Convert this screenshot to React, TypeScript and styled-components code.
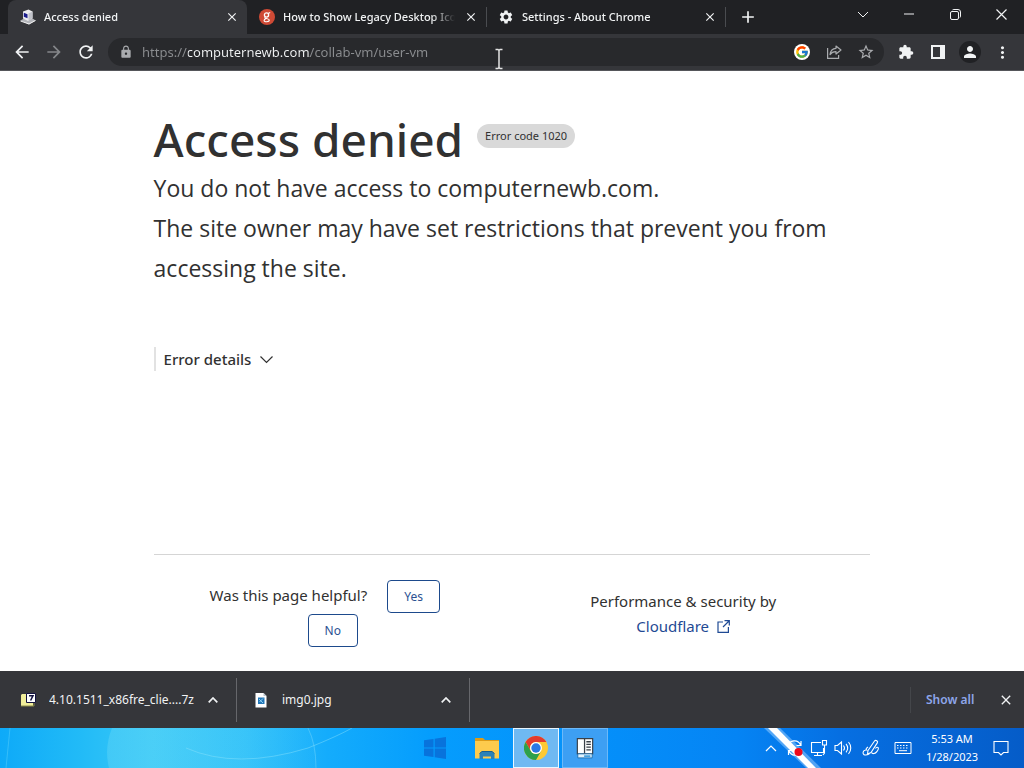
import React from "react";
import styled, { createGlobalStyle } from "styled-components";
import {
  MdAdd,
  MdArrowBack,
  MdArrowForward,
  MdClose,
  MdExtension,
  MdLock,
  MdMoreVert,
  MdPerson,
  MdRefresh,
  MdSettings,
  MdStarBorder,
} from "react-icons/md";
import { FcGoogle } from "react-icons/fc";

const GlobalStyle = createGlobalStyle`
  *, *::before, *::after { box-sizing: border-box; }
  body {
    margin: 0;
    background: #fff;
    font-family: "Noto Sans", "Open Sans", sans-serif;
    color: #313131;
  }
  h1, p { margin: 0; }
  button { border: 0; padding: 0; background: none; color: inherit; font: inherit; }
  svg { display: block; flex: none; }
`;

const Screen = styled.div`
  display: flex;
  flex-direction: column;
  min-height: 100vh;
`;

/* ---------- tab strip ---------- */

const TabStrip = styled.header`
  display: flex;
  height: 34px;
  padding-left: 8px;
  background: #202124;
  color: #f1f3f4;
`;

const Tab = styled.div<{ $active?: boolean; $divided?: boolean }>`
  display: flex;
  align-items: center;
  gap: 8px;
  flex: 0 1 239px;
  min-width: 0;
  padding: 0 7px 0 12px;
  font-size: 11px;
  font-weight: 500;
  border-radius: ${(p) => (p.$active ? "8px 8px 0 0" : "0")};
  background: ${(p) => (p.$active ? "#35363a" : "transparent")};
  background-image: ${(p) => (p.$divided ? "linear-gradient(#4a4c50, #4a4c50)" : "none")};
  background-size: 1px 20px;
  background-position: left center;
  background-repeat: no-repeat;
`;

const TabTitle = styled.span`
  flex: 1;
  min-width: 0;
  overflow: hidden;
  white-space: nowrap;
  line-height: 20px;
  mask-image: linear-gradient(to left, transparent, #000 24px);
`;

const TabClose = styled.button`
  display: grid;
  place-items: center;
  width: 16px;
  height: 16px;
`;

const NewTab = styled.button`
  display: grid;
  place-items: center;
  width: 46px;
  background: linear-gradient(#4a4c50, #4a4c50) left center / 1px 20px no-repeat;
`;

const WindowControls = styled.div`
  display: flex;
  margin-left: auto;
  height: 28px;
`;

const WindowButton = styled.button`
  display: grid;
  place-items: center;
  width: 46px;
`;

/* ---------- toolbar ---------- */

const Toolbar = styled.div`
  position: relative;
  display: flex;
  align-items: center;
  gap: 4px;
  height: 37px;
  padding: 0 8px;
  background: #35363a;
  border-bottom: 1px solid #55565a;
  color: #f1f3f4;
`;

const ToolButton = styled.button<{ $muted?: boolean }>`
  display: grid;
  place-items: center;
  width: 28px;
  height: 28px;
  border-radius: 50%;
  color: ${(p) => (p.$muted ? "#85878a" : "inherit")};
`;

const Avatar = styled.span`
  display: grid;
  place-items: center;
  width: 22px;
  height: 22px;
  border-radius: 50%;
  background: #202124;
`;

const SearchBrand = styled.span`
  display: grid;
  place-items: center;
  width: 16px;
  height: 16px;
  border-radius: 50%;
  background: #fff;
`;

const Omnibox = styled.div`
  display: flex;
  align-items: center;
  gap: 4px;
  flex: 1;
  min-width: 0;
  height: 28px;
  margin: 0 4px;
  padding: 0 4px 0 11px;
  border-radius: 14px;
  background: #28292c;
  color: #a9abae;
`;

/* The host part of the address is lit, scheme and path are dimmed. */
const Address = styled.input`
  flex: 1;
  min-width: 0;
  height: 24px;
  margin-left: 5px;
  padding: 0;
  border: 0;
  outline: 0;
  font: 13px "Noto Sans", "Open Sans", sans-serif;
  color: #f1f3f4;
  background: linear-gradient(to right, #8b8d90 46px, #f1f3f4 46px 168px, #8b8d90 168px);
  -webkit-background-clip: text;
  background-clip: text;
  -webkit-text-fill-color: transparent;
`;

const Pointer = styled.svg`
  position: absolute;
  left: 494px;
  top: 14px;
`;

/* ---------- error page ---------- */

const Page = styled.main`
  flex: 1;
  display: flex;
  flex-direction: column;
  width: 70%;
  margin: 0 auto;
  padding: 39px 0 24px;
`;

const TitleRow = styled.div`
  display: flex;
  align-items: center;
  gap: 14px;
`;

const Title = styled.h1`
  font-size: 46px;
  line-height: 58px;
  font-weight: 500;
`;

const CodeBadge = styled.span`
  margin-bottom: 6px;
  padding: 0 8px;
  border-radius: 12px;
  background: #d9d9d9;
  font-size: 11px;
  line-height: 24px;
`;

const Lead = styled.p`
  font-family: "Open Sans", "Noto Sans", sans-serif;
  font-size: 23px;
  line-height: 40px;
  font-weight: 400;
`;

const DetailsToggle = styled.button`
  display: flex;
  align-items: center;
  align-self: flex-start;
  gap: 8px;
  height: 24px;
  margin-top: 59px;
  padding-left: 8px;
  border-left: 2px solid #e2e2e2;
  font-size: 15px;
  font-weight: 500;
`;

const PageFooter = styled.footer`
  display: grid;
  grid-template-columns: 1fr 1fr;
  align-items: center;
  margin-top: auto;
  padding-top: 25px;
  border-top: 1px solid #d5d5d5;
  font-size: 15px;
  line-height: 24px;
`;

const FooterCell = styled.div`
  display: flex;
  flex-direction: column;
  align-items: center;
  gap: 1px;
  padding-right: 16px;
`;

const FeedbackRow = styled.div`
  display: flex;
  align-items: baseline;
  gap: 4px;
`;

const FeedbackButton = styled.button`
  height: 33px;
  margin-left: 16px;
  padding: 0 16px;
  border: 1px solid #1d4a8c;
  border-radius: 4px;
  color: #2c5192;
  font-size: 12px;
`;

const BrandLink = styled.a`
  display: flex;
  align-items: center;
  gap: 8px;
  color: #1f4a94;
  text-decoration: none;
`;

/* ---------- download shelf ---------- */

const Shelf = styled.section`
  display: flex;
  align-items: center;
  height: 57px;
  padding-left: 4px;
  background: #35363a;
  color: #f1f3f4;
  font-size: 12px;
`;

const Download = styled.div`
  display: flex;
  align-items: center;
  flex: 0 1 233px;
  min-width: 0;
  height: 44px;
  padding: 0 15px 0 16px;
  border-right: 1px solid #66676b;
`;

const FileName = styled.span`
  flex: 1;
  min-width: 0;
  margin-left: 13px;
  overflow: hidden;
  white-space: nowrap;
`;

const ShelfActions = styled.div`
  display: flex;
  align-items: center;
  justify-content: space-between;
  width: 114px;
  height: 26px;
  margin-left: auto;
  padding: 0 10px 0 15px;
  border-left: 1px solid #44464a;
`;

const ShowAll = styled.button`
  color: #8ea6ea;
  font-size: 12px;
  font-weight: 600;
`;

/* ---------- taskbar ---------- */

const Taskbar = styled.footer`
  position: relative;
  display: grid;
  grid-template-columns: 1fr auto 1fr;
  height: 40px;
  padding-right: 7px;
  color: #fff;
  background: linear-gradient(
    to right,
    #0eaaf8 0%,
    #22bbf7 8%,
    #3bc9f7 15%,
    #2fc0f9 24%,
    #14acfc 32%,
    #059dfd 42%,
    #0490fa 58%,
    #0584f4 72%,
    #066fe2 82%,
    #055cc8 100%
  );
`;

const Wallpaper = styled.svg`
  position: absolute;
  inset: 0;
  width: 100%;
  height: 100%;
`;

const Apps = styled.nav`
  position: relative;
  grid-column: 2;
  display: flex;
  gap: 3px;
`;

const AppButton = styled.button<{ $state?: "open" | "active"; $wide?: boolean }>`
  display: grid;
  place-items: center;
  width: ${(p) => (p.$wide ? "52px" : "46px")};
  border: ${(p) =>
    p.$state === "active" ? "1px solid #e8f6ff" : p.$state === "open" ? "1px solid #6cb9f8" : "0"};
  background: ${(p) =>
    p.$state === "active" ? "#6fb9f2" : p.$state === "open" ? "#3d9ff3" : "none"};
`;

const Tray = styled.div`
  position: relative;
  display: flex;
  align-items: center;
  justify-content: flex-end;
`;

const TrayButton = styled.button<{ $width: number }>`
  display: grid;
  place-items: center;
  width: ${(p) => p.$width}px;
  height: 40px;
`;

const Clock = styled.time`
  width: 66px;
  font-size: 11px;
  line-height: 18px;
  text-align: center;
`;

/* ---------- drawings ---------- */

const ComputerIcon = () => (
  <svg width="16" height="16" viewBox="0 0 16 16">
    <path d="M.5 11.500L4 9.500l8-.5 3.500 2.500-6.500 4z" fill="#b3b5ba" />
    <path d="M.5 12l8.500 3 6.500-3.500" fill="none" stroke="#f3f3f3" />
    <path d="M3 2.500L8.500 .5 12.500 2.500v6.500L8 12 3 9.500z" fill="#ececef" />
    <path d="M8.500 4.500l4-2v6.500L8.500 11.500z" fill="#c0c2c9" />
    <path d="M3.800 3.800l3.700 1.400v4L3.800 7.800z" fill="#1b1c8c" />
  </svg>
);

const GrooveIcon = () => (
  <svg width="16" height="16" viewBox="0 0 16 16">
    <circle cx="8" cy="8" r="8" fill="#cf4a35" />
    <circle cx="7.500" cy="6" r="2.100" fill="none" stroke="#fff" strokeWidth="1.300" />
    <path d="M9 4.600l2.200-1M6.300 8.200c-2 1.400 4 .9 4 2.900 0 2.200-5.200 2.200-5.200.3 0-1 1-1.400 1.800-1.600" fill="none" stroke="#fff" strokeWidth="1.100" />
  </svg>
);

const ShareIcon = () => (
  <svg width="16" height="16" viewBox="0 0 16 16" fill="none" stroke="currentColor" strokeWidth="1.200">
    <path d="M1.600 4v10.400h11V11" />
    <path d="M10 2l5 4-5 4V7.700C7 7.600 5.500 8.500 4 10.600 4.500 7 6.500 4.500 10 4.300z" strokeLinejoin="round" />
  </svg>
);

const SidePanelIcon = () => (
  <svg width="14" height="14" viewBox="0 0 14 14">
    <path d="M0 0h14v14H0zM2 2v10h7V2z" fill="currentColor" fillRule="evenodd" />
  </svg>
);

const CaretUp = () => (
  <svg width="10" height="6" viewBox="0 0 10 6" fill="none" stroke="currentColor" strokeWidth="1.700">
    <path d="M.7 5.300L5 1l4.300 4.300" />
  </svg>
);

const ArchiveIcon = () => (
  <svg width="16" height="16" viewBox="0 0 16 16">
    <path d="M1 3l1-1h4v2h7v10H1z" fill="#f1ee9a" />
    <path d="M1 14h13V8" fill="none" stroke="#8b8a4a" />
    <path d="M6.500 1.500h9v9h-9z" fill="#fff" stroke="#12123f" />
    <path d="M9 3.700h4L10.600 8.500" fill="none" stroke="#12123f" strokeWidth="1.500" />
  </svg>
);

const ImageFileIcon = () => (
  <svg width="16" height="16" viewBox="0 0 16 16">
    <path d="M2.500 1h8l3 3v11.500h-11z" fill="#fff" />
    <path d="M10.500 1v3h3z" fill="#b9c3cc" />
    <path d="M5 5.500h6.500V12H5z" fill="#2277b8" />
    <path d="M6 7l4 4M10 6.500L6.500 10" stroke="#8cd0f2" />
  </svg>
);

const WindowsIcon = () => (
  <svg width="22" height="22" viewBox="0 0 22 22" fill="#0873dc">
    <path d="M0 3.200L9.500 2v8.500H0zM10.700 1.800L22 0v10.500H10.700zM0 11.600h9.500V20L0 18.700zM10.700 11.600H22V22l-11.300-1.700z" />
  </svg>
);

const FolderIcon = () => (
  <svg width="26" height="24" viewBox="0 0 26 24">
    <path d="M1 2h8l2 2h14v8H1z" fill="#dd9b17" />
    <path d="M1 5h24v17.500H1z" fill="#fdcb4d" />
    <path d="M5.500 23v-5.500l2.500-2h10l2.500 2V23h-3.500v-2.500H9V23z" fill="#2c82b8" />
    <path d="M5.500 17.500l2.500-2h10l2.500 2" fill="none" stroke="#175f93" />
  </svg>
);

const ChromeIcon = () => (
  <svg width="24" height="24" viewBox="0 0 24 24">
    <circle cx="12" cy="12" r="12" fill="#fcc934" />
    <path d="M1.600 6A12 12 0 0 1 22.400 6H12a6 6 0 0 0-5.200 9z" fill="#e33b2e" />
    <path d="M1.600 6A12 12 0 0 0 12 24l5.200-9A6 6 0 0 1 6.800 15z" fill="#2da04c" />
    <circle cx="12" cy="12" r="6" fill="#fff" />
    <circle cx="12" cy="12" r="4.700" fill="#2a78e4" />
  </svg>
);

const ServerAppIcon = () => (
  <svg width="18" height="22" viewBox="0 0 20 24">
    <path d="M1.500 1.500h17v17h-17z" fill="#fff" stroke="#3a4048" strokeWidth="1.300" />
    <path d="M9.500 1.500v17" stroke="#3a4048" strokeWidth="1.400" />
    <path d="M11.500 5h5M11.500 8h5M11.500 11h5M11.500 14h5" stroke="#3a4048" strokeWidth="1.500" />
    <path d="M2 18.500h16V23H2z" fill="#e4f3fc" stroke="#1b6cae" />
    <path d="M9 21h7" stroke="#1b8ad6" strokeWidth="1.500" />
  </svg>
);

const SyncIcon = () => (
  <svg width="18" height="18" viewBox="0 0 18 18" fill="none" stroke="#fff" strokeWidth="1.200">
    <path d="M2 7.500A6.500 6.500 0 0 1 14.500 6M15 2v4.500h-4.500M15.500 10A6.500 6.500 0 0 1 3 12M2.500 16v-4.500H7" />
    <circle cx="12.500" cy="13" r="4" fill="#f0091c" stroke="none" />
  </svg>
);

const NetworkIcon = () => (
  <svg width="18" height="18" viewBox="0 0 18 18" fill="none" stroke="#fff" strokeWidth="1.100">
    <path d="M11 3.500H1.500v10h12V9M7.500 13.500v3M4 16.500h8" />
    <path d="M12.500 1.500h4v4.500h-4zM14.500 6v8l-1.500 2" />
  </svg>
);

const SpeakerIcon = () => (
  <svg width="18" height="16" viewBox="0 0 18 16" fill="none" stroke="#fff" strokeWidth="1.100">
    <path d="M1 5.500h2.500L7.500 2v12l-4-3.500H1zM9.500 5.500c1.200 1.500 1.200 3.500 0 5M12 3.800c2 2.500 2 6 0 8.500M14.500 2c3 3.500 3 8.500 0 12" />
  </svg>
);

const PenIcon = () => (
  <svg width="18" height="18" viewBox="0 0 18 18" fill="none" stroke="#fff" strokeWidth="1.100">
    <path d="M6 11.500L12.500 2c1.300-1.500 3.900.2 2.800 1.900L9 13.500 5.500 15z" />
    <path d="M6 8C4.500 9 3.500 10 4.500 11c-4-.5-4.500 4.500-1.500 5 2.500.3 3-.5 4.500-1.500M9.500 13.500c1 2 3.500 1 5-.5s2.500-4 1.500-4.500-2 0-2.500 1" />
  </svg>
);

const KeyboardIcon = () => (
  <svg width="18" height="12" viewBox="0 0 18 12" fill="none" stroke="#fff">
    <path d="M1 .5h16v11H1z" />
    <path d="M3 3.500h12M3 6h12" strokeDasharray="1.500 1.500" />
    <path d="M5 8.700h8" />
  </svg>
);

const NoticeIcon = () => (
  <svg width="16" height="16" viewBox="0 0 16 16" fill="none" stroke="#fff" strokeWidth="1.100">
    <path d="M1 1.500h14v11h-4.500L8 15l-2.500-2.500H1z" />
  </svg>
);

export default function App() {
  return (
    <>
      <GlobalStyle />
      <Screen>
        <TabStrip>
          <Tab $active>
            <ComputerIcon />
            <TabTitle>Access denied</TabTitle>
            <TabClose aria-label="Close tab"><MdClose size={14} /></TabClose>
          </Tab>
          <Tab>
            <GrooveIcon />
            <TabTitle>How to Show Legacy Desktop Icons</TabTitle>
            <TabClose aria-label="Close tab"><MdClose size={14} /></TabClose>
          </Tab>
          <Tab $divided>
            <MdSettings size={16} />
            <TabTitle>Settings - About Chrome</TabTitle>
            <TabClose aria-label="Close tab"><MdClose size={14} /></TabClose>
          </Tab>
          <NewTab aria-label="New tab"><MdAdd size={20} /></NewTab>
          <WindowControls>
            <WindowButton aria-label="Search tabs">
              <svg width="12" height="7" viewBox="0 0 12 7" fill="none" stroke="currentColor"><path d="M1 1l5 5 5-5" /></svg>
            </WindowButton>
            <WindowButton aria-label="Minimize">
              <svg width="10" height="2" viewBox="0 0 10 2"><path d="M0 .5h10v1H0z" fill="currentColor" /></svg>
            </WindowButton>
            <WindowButton aria-label="Restore">
              <svg width="11" height="11" viewBox="0 0 11 11" fill="none" stroke="currentColor">
                <rect x=".5" y="2.500" width="8" height="8" rx="1.500" />
                <path d="M2.500 .9Q3 .5 4 .5h4a2.500 2.500 0 0 1 2.500 2.500v4q0 1-.5 1.500" />
              </svg>
            </WindowButton>
            <WindowButton aria-label="Close">
              <svg width="11" height="11" viewBox="0 0 11 11" stroke="currentColor" strokeWidth="1.200"><path d="M.5 .5l10 10M10.500 .5l-10 10" /></svg>
            </WindowButton>
          </WindowControls>
        </TabStrip>

        <Toolbar>
          <ToolButton aria-label="Back"><MdArrowBack size={20} /></ToolButton>
          <ToolButton $muted aria-label="Forward"><MdArrowForward size={20} /></ToolButton>
          <ToolButton aria-label="Reload"><MdRefresh size={20} /></ToolButton>
          <Omnibox>
            <MdLock size={14} />
            <Address aria-label="Address" defaultValue="https://computernewb.com/collab-vm/user-vm" spellCheck={false} />
            <ToolButton aria-label="Search with Google"><SearchBrand><FcGoogle size={14} /></SearchBrand></ToolButton>
            <ToolButton aria-label="Share"><ShareIcon /></ToolButton>
            <ToolButton aria-label="Bookmark"><MdStarBorder size={18} /></ToolButton>
          </Omnibox>
          <ToolButton aria-label="Extensions"><MdExtension size={16} /></ToolButton>
          <ToolButton aria-label="Side panel"><SidePanelIcon /></ToolButton>
          <ToolButton aria-label="Profile"><Avatar><MdPerson size={18} /></Avatar></ToolButton>
          <ToolButton aria-label="Menu"><MdMoreVert size={19} /></ToolButton>
          <Pointer width="10" height="22" viewBox="0 0 10 22" fill="none" stroke="#e4e4e4" strokeWidth="1.500">
            <path d="M1.500 1.500H4L5 2.500 6 1.500h2.500M5 2.500v17M1.500 20.500H4l1-1 1 1h2.500" />
          </Pointer>
        </Toolbar>

        <Page>
          <TitleRow>
            <Title>Access denied</Title>
            <CodeBadge>Error code 1020</CodeBadge>
          </TitleRow>
          <Lead>You do not have access to computernewb.com.</Lead>
          <Lead>The site owner may have set restrictions that prevent you from accessing the site.</Lead>
          <DetailsToggle aria-expanded={false}>
            Error details
            <svg width="15" height="9" viewBox="0 0 15 9" fill="none" stroke="currentColor" strokeWidth="1.200"><path d="M1.500 1.500l6 6 6-6" /></svg>
          </DetailsToggle>
          <PageFooter>
            <FooterCell>
              <FeedbackRow>
                Was this page helpful?
                <FeedbackButton>Yes</FeedbackButton>
              </FeedbackRow>
              <FeedbackButton>No</FeedbackButton>
            </FooterCell>
            <FooterCell>
              <span>Performance &amp; security by</span>
              <BrandLink href="#cloudflare">
                Cloudflare
                <svg width="13" height="13" viewBox="0 0 13 13" fill="none" stroke="currentColor" strokeWidth="1.200">
                  <path d="M6 2H1v10.400h10.400V7M7.500 .700h4.800v4.800M12 1L6 7" />
                </svg>
              </BrandLink>
            </FooterCell>
          </PageFooter>
        </Page>

        <Shelf aria-label="Downloads">
          <Download>
            <ArchiveIcon />
            <FileName>4.10.1511_x86fre_clie....7z</FileName>
            <TabClose aria-label="File options"><CaretUp /></TabClose>
          </Download>
          <Download>
            <ImageFileIcon />
            <FileName>img0.jpg</FileName>
            <TabClose aria-label="File options"><CaretUp /></TabClose>
          </Download>
          <ShelfActions>
            <ShowAll>Show all</ShowAll>
            <TabClose aria-label="Close downloads"><MdClose size={16} /></TabClose>
          </ShelfActions>
        </Shelf>

        <Taskbar>
          <Wallpaper viewBox="0 0 1024 40" preserveAspectRatio="none" fill="none">
            <defs>
              <linearGradient id="glow" x1="0" x2="1" y1="0" y2="0">
                <stop offset="0" stopColor="#7be0f6" stopOpacity=".3" />
                <stop offset="1" stopColor="#7be0f6" stopOpacity=".05" />
              </linearGradient>
            </defs>
            <path d="M112 0q-8 20-3 40h207q2-24-8-40z" fill="url(#glow)" />
            <path d="M308 0q8 16 8 40" stroke="#6fd3fb" opacity=".5" />
            <path d="M186 20q50 22 122 0 30-12 44-20" stroke="#8be2fb" opacity=".45" />
            <path d="M10 0L6 40" stroke="#59d0fb" opacity=".5" />
            <path d="M764 0h16l41 40h-15z" fill="#9fd2ff" opacity=".5" />
            <path d="M768 0h9l39 40h-8z" fill="#fff" />
          </Wallpaper>
          <Apps aria-label="Taskbar apps">
            <AppButton $wide aria-label="Start"><WindowsIcon /></AppButton>
            <AppButton aria-label="File Explorer"><FolderIcon /></AppButton>
            <AppButton $state="active" aria-label="Chrome"><ChromeIcon /></AppButton>
            <AppButton $state="open" aria-label="Server tool"><ServerAppIcon /></AppButton>
          </Apps>
          <Tray>
            <TrayButton $width={24} aria-label="Hidden icons">
              <svg width="12" height="7" viewBox="0 0 12 7" fill="none" stroke="#fff" strokeWidth="1.200"><path d="M1 6l5-5 5 5" /></svg>
            </TrayButton>
            <TrayButton $width={24} aria-label="Sync"><SyncIcon /></TrayButton>
            <TrayButton $width={24} aria-label="Network"><NetworkIcon /></TrayButton>
            <TrayButton $width={24} aria-label="Volume"><SpeakerIcon /></TrayButton>
            <TrayButton $width={32} aria-label="Pen"><PenIcon /></TrayButton>
            <TrayButton $width={32} aria-label="Keyboard"><KeyboardIcon /></TrayButton>
            <Clock>5:53 AM<br />1/28/2023</Clock>
            <TrayButton $width={32} aria-label="Notifications"><NoticeIcon /></TrayButton>
          </Tray>
        </Taskbar>
      </Screen>
    </>
  );
}
